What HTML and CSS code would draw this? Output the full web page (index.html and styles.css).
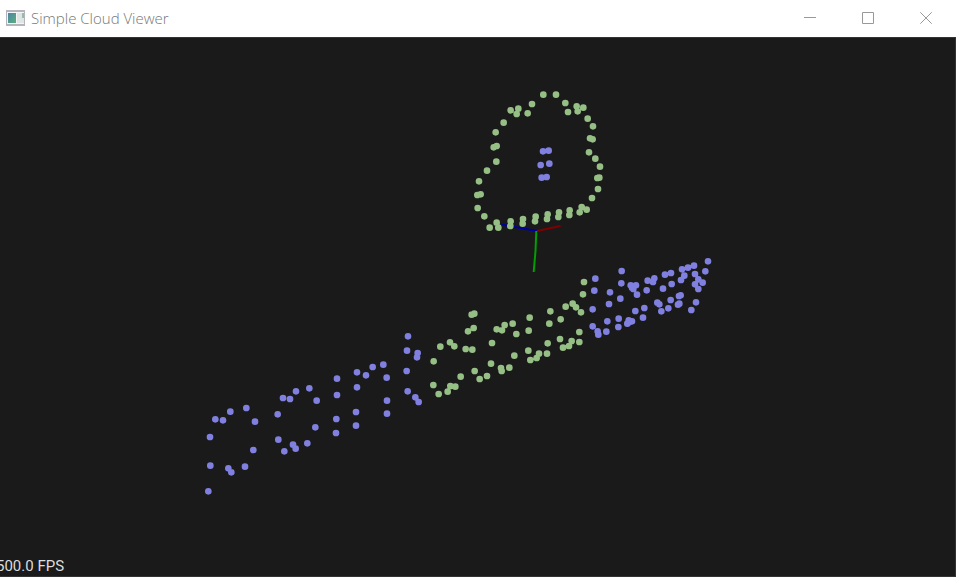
FILE: index.html
```html
<!DOCTYPE html>
<html lang="en">
<head>
<meta charset="utf-8">
<title>Simple Cloud Viewer</title>
<link rel="stylesheet" href="styles.css">
</head>
<body>
<div class="window">
  <header class="titlebar">
    <svg class="app-icon" viewBox="0 0 20 18" aria-hidden="true">
      <defs>
        <linearGradient id="pane" x1="0" y1="0" x2="1" y2="1">
          <stop offset="0" stop-color="#4a86a8"/><stop offset="1" stop-color="#5cae7c"/>
        </linearGradient>
      </defs>
      <path fill="#b4b4bc" d="M0 1h19v16H0z"/>
      <path fill="#f4f4f6" d="M1 3h17v12H1z"/>
      <path fill="url(#pane)" d="M2 4h8v10H2z"/>
      <path fill="#dfe5e3" d="M11 4h7v10h-7z"/>
      <path fill="#8fbfa6" d="M16 4h2v5h-2z"/>
    </svg>
    <h1 class="title">Simple Cloud Viewer</h1>
    <div class="controls">
      <button class="control" type="button" aria-label="Minimize"><svg viewBox="0 0 12 12"><path d="M0 5.500h12"/></svg></button>
      <button class="control" type="button" aria-label="Maximize"><svg viewBox="0 0 12 12"><path d="M.5.5h11v11H.5z"/></svg></button>
      <button class="control" type="button" aria-label="Close"><svg viewBox="0 0 12 12"><path d="M.3.3l11.400 11.400M11.700.3L.3 11.700"/></svg></button>
    </div>
  </header>
  <main class="viewport">
    <svg class="scene" viewBox="0 38 955 538" role="img" aria-label="Point cloud">
      <g class="axes">
        <path class="axis-z" d="M501 224.500L537 231"/>
        <path class="axis-x" d="M537 231L560.500 226"/>
        <path class="axis-y" d="M536.300 231L535.500 251L533.700 272"/>
      </g>
      <g class="points green">
        <path transform="translate(465 80) scale(.33333)" d="M235 44h0M273 44h0M201 72h0M188 100h0M160 86h0M155 102h0M137 91h0M116 128h0M92 157h0M95 198h0M86 202h0M94 245h0M66 272h0M301 69h0M309 96h0M335 79h0M338 94h0M355 83h0M368 116h0M384 139h0M375 175h0M383 178h0M372 217h0M391 236h0M405 260h0"/>
        <path transform="translate(465 170) scale(.33333)" d="M42 34h0M37 75h0M47 73h0M38 114h0M58 139h0M74 173h0M95 158h0M100 173h0M137 154h0M136 168h0M174 147h0M173 161h0M212 140h0M210 154h0M248 133h0M246 147h0M282 127h0M280 141h0M314 121h0M313 135h0M350 111h0M344 127h0M365 119h0M381 84h0M399 57h0M397 24h0M403 23h0"/>
        <path transform="translate(420 270) scale(.33333)" d="M492 36h0M489 73h0M458 101h0M468 112h0M483 127h0M437 110h0M391 124h0M422 148h0M388 161h0M329 143h0M326 182h0M278 161h0M289 192h0M254 165h0M246 181h0M230 178h0M216 219h0M163 131h0M155 134h0M161 174h0M144 184h0M137 237h0M157 239h0M90 217h0M103 229h0M61 230h0M41 274h0M40 345h0M56 372h0M83 365h0M91 348h0M106 350h0M122 320h0M164 303h0M179 327h0M201 318h0M213 281h0M243 294h0M245 303h0M268 293h0M283 257h0M325 242h0M331 270h0M350 264h0M357 251h0M381 251h0M383 220h0M420 207h0M429 233h0M447 228h0M455 213h0M478 216h0M478 186h0"/>
      </g>
      <g class="points blue">
        <path transform="translate(465 80) scale(.33333)" d="M234 214h0M251 212h0M227 255h0M253 251h0M230 293h0M245 291h0"/>
        <path transform="translate(580 250) scale(.33333)" d="M384 34h0M376 64h0M342 47h0M324 53h0M306 58h0M313 77h0M303 90h0M345 72h0M355 88h0M368 98h0M345 103h0M355 117h0M348 157h0M334 180h0M273 69h0M255 74h0M275 102h0M249 116h0M223 85h0M219 96h0M203 92h0M200 121h0M125 63h0M124 100h0M152 106h0M168 106h0M156 113h0M160 117h0M171 134h0M121 146h0M90 127h0M87 162h0M46 86h0M43 122h0M38 178h0M38 229h0M53 244h0M55 254h0M79 245h0M82 214h0M116 206h0M115 231h0M146 211h0M142 221h0M156 214h0M148 216h0M166 183h0M193 174h0M189 203h0M232 158h0M238 163h0M244 184h0M265 175h0M272 150h0M297 138h0M302 136h0M294 164h0M298 161h0"/>
        <path transform="translate(320 325) scale(.33333)" d="M264 34h0M261 77h0M293 84h0M291 97h0M260 138h0M263 199h0M286 217h0M296 231h0M190 119h0M158 126h0M138 151h0M111 142h0M111 187h0M200 158h0M201 227h0M201 266h0M108 261h0M108 302h0M51 161h0M51 210h0M49 282h0M48 324h0"/>
        <path transform="translate(195 375) scale(.33333)" d="M343 40h0M303 49h0M264 69h0M285 72h0M365 77h0M248 118h0M361 157h0M337 205h0M294 209h0M302 221h0M268 229h0M250 194h0M154 99h0M180 140h0M106 110h0M84 136h0M61 133h0M45 186h0M46 272h0M40 349h0M100 280h0M109 292h0M150 275h0M175 225h0"/>
      </g>
    </svg>
    <p class="fps">500.0 FPS</p>
  </main>
</div>
</body>
</html>
```

FILE: styles.css
```css
* { box-sizing: border-box; }

body { margin: 0; }

.window {
  display: flex;
  flex-direction: column;
  height: 100vh;
  background: #fff;
}

.titlebar {
  display: flex;
  align-items: center;
  flex: none;
  height: 37px;
  padding: 0 1px 2px 6px;
}

.app-icon {
  width: 20px;
  height: 18px;
  margin-right: 5px;
}

.title {
  flex: 1;
  margin: 0;
  font: 300 15px/20px "Open Sans", sans-serif;
  color: #777;
}

.controls { display: flex; }

.control {
  display: grid;
  place-items: center;
  width: 58px;
  height: 34px;
  padding: 0;
  border: 0;
  background: none;
}

.control svg {
  width: 12px;
  height: 12px;
  fill: none;
  stroke: #999;
}

.viewport {
  position: relative;
  flex: 1;
  min-height: 0;
  overflow: hidden;
  border: solid #333;
  border-width: 1px 1px 1px 0;
  background: #1a1a1a;
}

.scene {
  display: block;
  width: 100%;
  height: 100%;
}

.points {
  fill: none;
  stroke-width: 20;
  stroke-linecap: round;
}

.green { stroke: #96bf86; }
.blue { stroke: #8080e0; }

.axes {
  fill: none;
  stroke-width: 2;
}

.axis-x { stroke: #800000; }
.axis-y { stroke: #00a000; }
.axis-z { stroke: #0000a0; }

.fps {
  position: absolute;
  left: -4px;
  bottom: 0;
  margin: 0;
  font: 400 15px/20px Roboto, sans-serif;
  color: #ddd;
}
```
